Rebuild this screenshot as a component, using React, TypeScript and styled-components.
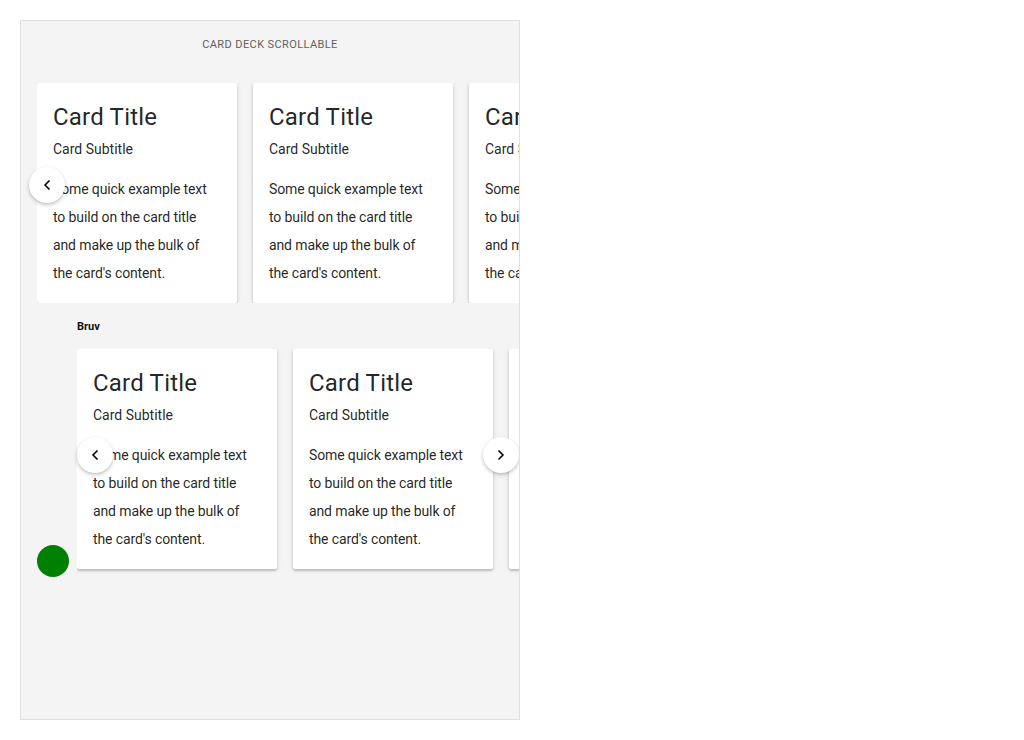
import React from 'react';
import styled, { createGlobalStyle } from 'styled-components';
import { ChevronLeft, ChevronRight } from 'lucide-react';

const GlobalStyle = createGlobalStyle`
  body {
    margin: 0;
    padding: 20px;
    background: #fff;
    font-family: Roboto, 'Noto Sans', sans-serif;
    color: rgba(0, 0, 0, 0.87);
  }
  * {
    box-sizing: border-box;
  }
`;

const Frame = styled.div`
  width: 500px;
  height: 700px;
  background: #f4f4f4;
  border: 1px solid #e0e0e0;
  display: flex;
  flex-direction: column;
  overflow: hidden;
`;

const Heading = styled.div`
  margin-top: 16px;
  height: 16px;
  line-height: 16px;
  font-size: 11px;
  letter-spacing: 0.4px;
  text-align: center;
  text-transform: uppercase;
  color: #5f5f5f;
`;

const Deck = styled.div<{ $offset: number }>`
  position: relative;
  margin-left: ${(p) => p.$offset}px;
`;

const Track = styled.div<{ $pad: number }>`
  display: flex;
  gap: 16px;
  overflow: hidden;
  padding-bottom: ${(p) => p.$pad}px;
`;

const Card = styled.div`
  flex: 0 0 200px;
  height: 220px;
  padding: 16px;
  background: #fff;
  border-radius: 2px;
  box-shadow: 0 2px 2px rgba(0, 0, 0, 0.14), 0 1px 4px rgba(0, 0, 0, 0.16);
`;

const CardTitle = styled.h2`
  margin: 2px 0 0;
  font-size: 24px;
  line-height: 32px;
  font-weight: 400;
  letter-spacing: 0.2px;
  white-space: nowrap;
`;

const CardSubtitle = styled.div`
  margin-top: 6px;
  font-size: 14px;
  line-height: 20px;
  white-space: nowrap;
`;

const CardText = styled.p`
  margin: 16px 0 0;
  font-size: 14px;
  line-height: 28px;
  letter-spacing: -0.12px;
  width: 164px;
`;

const Arrow = styled.button<{ $side: 'left' | 'right'; $top: number; $shift: number }>`
  position: absolute;
  top: ${(p) => p.$top}px;
  ${(p) => p.$side}: ${(p) => p.$shift}px;
  width: 36px;
  height: 36px;
  border: none;
  border-radius: 50%;
  padding: 0;
  background: #fff;
  color: #000;
  display: flex;
  align-items: center;
  justify-content: center;
  box-shadow: 0 2px 4px rgba(0, 0, 0, 0.18), 0 1px 2px rgba(0, 0, 0, 0.1);
  cursor: pointer;
`;

const SecondRow = styled.div`
  display: flex;
  align-items: flex-end;
  gap: 8px;
  padding-left: 16px;
  margin-top: 17px;
`;

const Dot = styled.div`
  flex: 0 0 32px;
  height: 32px;
  border-radius: 50%;
  background: #008000;
`;

const Column = styled.div`
  flex: 1;
  min-width: 0;
  display: flex;
  flex-direction: column;
  gap: 15px;
`;

const Label = styled.div`
  font-size: 11px;
  line-height: 14px;
  font-weight: 700;
  color: #111;
`;

const FirstDeckSpacer = styled.div`
  height: 30px;
`;

const SampleCard = () => (
  <Card>
    <CardTitle>Card Title</CardTitle>
    <CardSubtitle>Card Subtitle</CardSubtitle>
    <CardText>
      Some quick example text to build on the card title and make up the bulk of the card's
      content.
    </CardText>
  </Card>
);

const cards = [0, 1, 2];

export default function App() {
  return (
    <>
      <GlobalStyle />
      <Frame>
        <Heading>Card deck scrollable</Heading>
        <FirstDeckSpacer />
        <Deck $offset={16}>
          <Track $pad={0}>
            {cards.map((c) => (
              <SampleCard key={c} />
            ))}
          </Track>
          <Arrow $side="left" $top={84} $shift={-8} aria-label="previous">
            <ChevronLeft size={16} strokeWidth={2.6} />
          </Arrow>
        </Deck>
        <SecondRow>
          <Dot />
          <Column>
            <Label>Bruv</Label>
            <Deck $offset={0}>
              <Track $pad={8}>
                {cards.map((c) => (
                  <SampleCard key={c} />
                ))}
              </Track>
              <Arrow $side="left" $top={88} $shift={0} aria-label="previous">
                <ChevronLeft size={16} strokeWidth={2.6} />
              </Arrow>
              <Arrow $side="right" $top={88} $shift={0} aria-label="next">
                <ChevronRight size={16} strokeWidth={2.6} />
              </Arrow>
            </Deck>
          </Column>
        </SecondRow>
      </Frame>
    </>
  );
}
